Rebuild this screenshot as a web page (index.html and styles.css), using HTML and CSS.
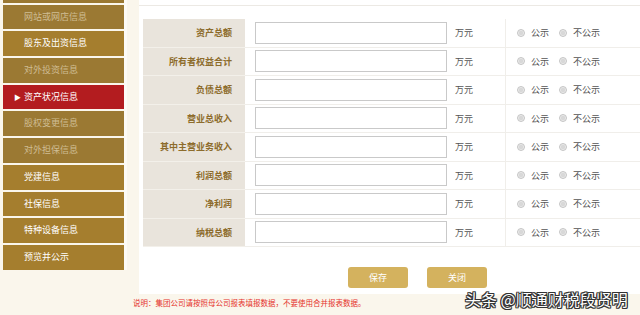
FILE: index.html
```html
<!DOCTYPE html>
<html lang="zh">
<head>
<meta charset="utf-8">
<title>资产状况信息</title>
<link rel="stylesheet" href="styles.css">
</head>
<body>
<div class="page">
  <nav class="sidebar">
    <div class="nav-item prev"></div>
    <div class="nav-item dim">网站或网店信息</div>
    <div class="nav-item">股东及出资信息</div>
    <div class="nav-item dim">对外投资信息</div>
    <div class="nav-item active"><span class="arrow">▶</span>资产状况信息</div>
    <div class="nav-item dim">股权变更信息</div>
    <div class="nav-item dim">对外担保信息</div>
    <div class="nav-item">党建信息</div>
    <div class="nav-item">社保信息</div>
    <div class="nav-item">特种设备信息</div>
    <div class="nav-item">预览并公示</div>
  </nav>
  <main class="main">
    <section class="panel">
      <div class="panel-top"></div>
      <div class="form">
        <div class="row"><div class="label">资产总额</div><div class="field"><span class="input"></span><span class="unit">万元</span></div><div class="radios"><span class="radio"></span><span class="rtext">公示</span><span class="radio"></span><span class="rtext">不公示</span></div></div>
        <div class="row"><div class="label">所有者权益合计</div><div class="field"><span class="input"></span><span class="unit">万元</span></div><div class="radios"><span class="radio"></span><span class="rtext">公示</span><span class="radio"></span><span class="rtext">不公示</span></div></div>
        <div class="row"><div class="label">负债总额</div><div class="field"><span class="input"></span><span class="unit">万元</span></div><div class="radios"><span class="radio"></span><span class="rtext">公示</span><span class="radio"></span><span class="rtext">不公示</span></div></div>
        <div class="row"><div class="label">营业总收入</div><div class="field"><span class="input"></span><span class="unit">万元</span></div><div class="radios"><span class="radio"></span><span class="rtext">公示</span><span class="radio"></span><span class="rtext">不公示</span></div></div>
        <div class="row"><div class="label">其中主营业务收入</div><div class="field"><span class="input"></span><span class="unit">万元</span></div><div class="radios"><span class="radio"></span><span class="rtext">公示</span><span class="radio"></span><span class="rtext">不公示</span></div></div>
        <div class="row"><div class="label">利润总额</div><div class="field"><span class="input"></span><span class="unit">万元</span></div><div class="radios"><span class="radio"></span><span class="rtext">公示</span><span class="radio"></span><span class="rtext">不公示</span></div></div>
        <div class="row"><div class="label">净利润</div><div class="field"><span class="input"></span><span class="unit">万元</span></div><div class="radios"><span class="radio"></span><span class="rtext">公示</span><span class="radio"></span><span class="rtext">不公示</span></div></div>
        <div class="row"><div class="label">纳税总额</div><div class="field"><span class="input"></span><span class="unit">万元</span></div><div class="radios"><span class="radio"></span><span class="rtext">公示</span><span class="radio"></span><span class="rtext">不公示</span></div></div>
      </div>
      <div class="buttons">
        <span class="btn">保存</span>
        <span class="btn">关闭</span>
      </div>
    </section>
    <p class="note">说明：集团公司请按照母公司报表填报数据，不要使用合并报表数据。</p>
  </main>
</div>
<div class="watermark">头条 @顺通财税段贤明</div>
</body>
</html>
```

FILE: styles.css
```css
html, body {
  margin: 0;
  padding: 0;
}
body {
  width: 640px;
  height: 315px;
  overflow: hidden;
  background: #faf6ec;
  font-family: "Noto Sans CJK SC", "Noto Sans", sans-serif;
  position: relative;
}
.page {
  display: flex;
  align-items: flex-start;
}
.sidebar {
  width: 121px;
  margin-left: 3px;
  display: flex;
  flex-direction: column;
  gap: 2px;
  border-right: 3px solid #fdfbf6;
}
.nav-item {
  height: 24.7px;
  line-height: 24.7px;
  padding-left: 21px;
  font-size: 9px;
  color: #ffffff;
  background: #a57e2e;
  white-space: nowrap;
}
.nav-item.prev {
  margin-top: -22px;
  background: #9a7832;
}
.nav-item.dim {
  background: #9b7933;
  color: #cfbd94;
}
.nav-item.active {
  background: #b31c1f;
  color: #ffffff;
  padding-left: 11px;
}
.arrow {
  display: inline-block;
  width: 10px;
  font-size: 7px;
}
.main {
  flex: 1;
  margin-left: 6px;
  display: flex;
  flex-direction: column;
}
.panel {
  margin-left: 6px;
  background: #ffffff;
  padding-left: 4px;
  padding-bottom: 6px;
}
.panel-top {
  height: 5px;
  border-bottom: 1px solid #ece9e4;
  margin-left: -4px;
}
.form {
  margin-top: 13px;
  display: flex;
  flex-direction: column;
}
.row {
  display: grid;
  grid-template-columns: 102px 260px 1fr;
  height: 28.5px;
  box-sizing: border-box;
}
.label {
  background: #e9e4dc;
  border-bottom: 1px solid #f3f0ea;
  text-align: right;
  padding-right: 13px;
  font-size: 9px;
  font-weight: bold;
  color: #8d6c2c;
  display: flex;
  align-items: center;
  justify-content: flex-end;
}
.field {
  display: flex;
  align-items: center;
  border-bottom: 1px solid #f0eeea;
}
.input {
  display: block;
  width: 192px;
  height: 22px;
  margin-left: 10px;
  box-sizing: border-box;
  border: 1px solid #c9c9c9;
  background: #ffffff;
}
.unit {
  margin-left: 8px;
  font-size: 9px;
  color: #555555;
}
.radios {
  display: flex;
  align-items: center;
  padding-left: 11px;
  border-left: 1px solid #f0eeea;
  border-bottom: 1px solid #f0eeea;
}
.radio {
  display: block;
  width: 8px;
  height: 8px;
  box-sizing: border-box;
  border-radius: 50%;
  border: 1px solid #c4c4c4;
  background: radial-gradient(circle, #d8d8d8 0, #d8d8d8 45%, #ebebeb 60%);
}
.rtext {
  margin-left: 6px;
  margin-right: 10px;
  font-size: 9px;
  color: #555555;
}
.buttons {
  display: flex;
  gap: 19px;
  margin-top: 20px;
  padding-left: 205px;
}
.btn {
  display: flex;
  align-items: center;
  justify-content: center;
  width: 60px;
  height: 21px;
  border-radius: 3px;
  background: #d4b25e;
  color: #ffffff;
  font-size: 9px;
}
.note {
  margin: 0;
  height: 18px;
  line-height: 18px;
  font-size: 7.5px;
  color: #e5322b;
  white-space: nowrap;
}
.watermark {
  position: absolute;
  left: 465px;
  top: 287px;
  font-size: 16px;
  color: #ffffff;
  white-space: nowrap;
  text-shadow: 1px 0 0 #333, -1px 0 0 #333, 0 1px 0 #333, 0 -1px 0 #333, 1px 1px 0 #333, -1px -1px 0 #333, 1px -1px 0 #333, -1px 1px 0 #333;
}
```
